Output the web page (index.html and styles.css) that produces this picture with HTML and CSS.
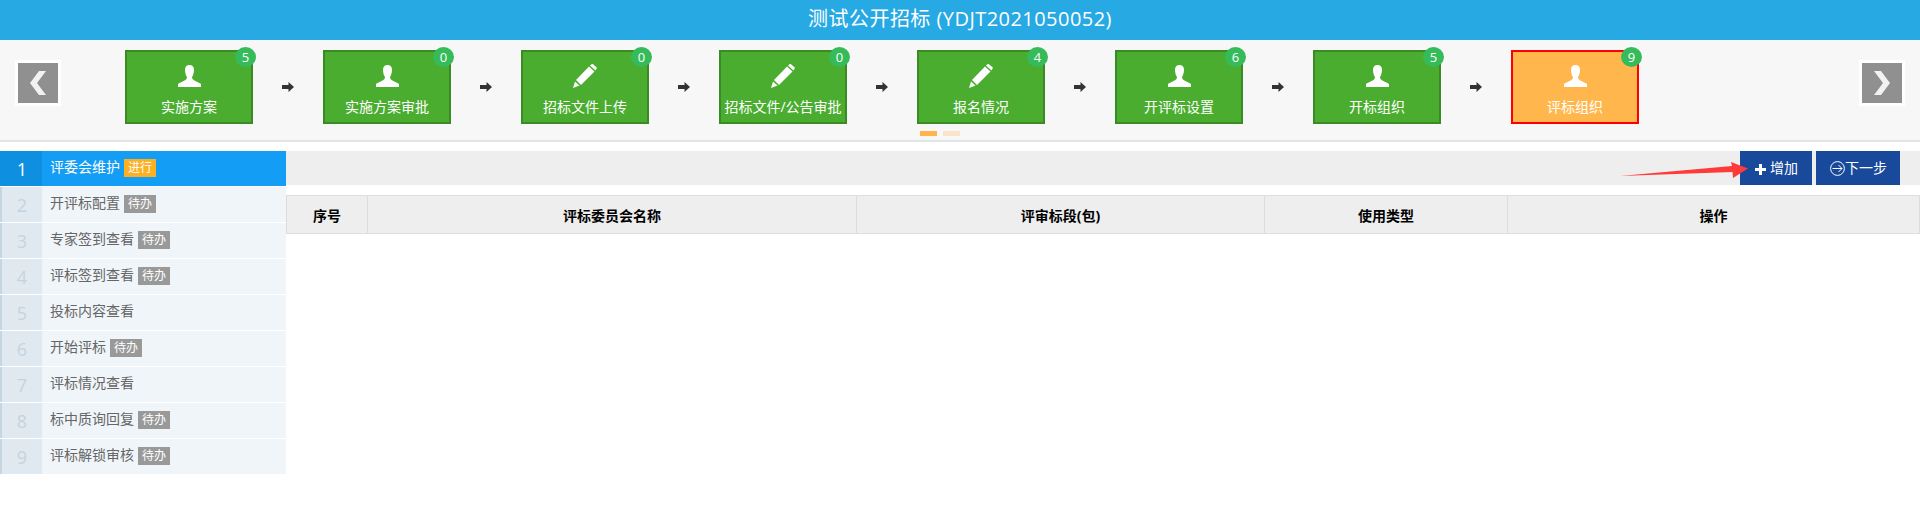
FILE: index.html
```html
<!DOCTYPE html>
<html lang="zh-CN">

<head>
    <meta charset="utf-8">
    <title>测试公开招标</title>
    <link rel="stylesheet" href="styles.css">
</head>

<body>
    <svg class="icon-defs" width="0" height="0">
        <symbol id="i-user" viewBox="0 0 23 22">
            <path d="M11.500 0C8.600 0 7 1.800 7 4.500c0 2.800.7 5.500 1.700 7 .3.6.3 1.700-.2 2.400C7.500 15.500 2.500 17 0 19v3h23v-3c-2.500-2-7.500-3.500-8.500-5.100-.5-.7-.5-1.800-.2-2.400 1-1.500 1.700-4.200 1.700-7C16 1.800 14.400 0 11.500 0z" />
        </symbol>
        <symbol id="i-pencil" viewBox="0 0 24 24">
            <path d="M0 24l2-6.500 4.500 4z" />
            <path d="M3 16L16 2.500l5.500 5L8 21z" />
            <path d="M17 1.500L18.500.3c.5-.4 1-.4 1.500 0l3.500 3c.4.4.4 1 0 1.400l-1 1.800z" />
        </symbol>
        <symbol id="i-arrow" viewBox="0 0 12 10">
            <path d="M0 3h6.500V0L12 5l-5.500 5V7H0z" />
        </symbol>
    </svg>

    <div class="title-bar">测试公开招标 (YDJT2021050052)</div>

    <div class="steps-bar">
        <div class="steps-row">
            <a class="nav-btn">
                <svg width="16" height="24" viewBox="0 0 16 24"><path d="M9 0h7L7 12l9 12H9L0 12z" /></svg>
            </a>
            <div class="steps">
                <div class="step"><span class="step-num">5</span><svg class="step-user"><use href="#i-user" /></svg><span>实施方案</span></div>
                <svg class="step-arrow"><use href="#i-arrow" /></svg>
                <div class="step"><span class="step-num">0</span><svg class="step-user"><use href="#i-user" /></svg><span>实施方案审批</span></div>
                <svg class="step-arrow"><use href="#i-arrow" /></svg>
                <div class="step"><span class="step-num">0</span><svg class="step-pencil"><use href="#i-pencil" /></svg><span>招标文件上传</span></div>
                <svg class="step-arrow"><use href="#i-arrow" /></svg>
                <div class="step"><span class="step-num">0</span><svg class="step-pencil"><use href="#i-pencil" /></svg><span>招标文件/公告审批</span></div>
                <svg class="step-arrow"><use href="#i-arrow" /></svg>
                <div class="step"><span class="step-num">4</span><svg class="step-pencil"><use href="#i-pencil" /></svg><span>报名情况</span></div>
                <svg class="step-arrow"><use href="#i-arrow" /></svg>
                <div class="step"><span class="step-num">6</span><svg class="step-user"><use href="#i-user" /></svg><span>开评标设置</span></div>
                <svg class="step-arrow"><use href="#i-arrow" /></svg>
                <div class="step"><span class="step-num">5</span><svg class="step-user"><use href="#i-user" /></svg><span>开标组织</span></div>
                <svg class="step-arrow"><use href="#i-arrow" /></svg>
                <div class="step step-active"><span class="step-num">9</span><svg class="step-user"><use href="#i-user" /></svg><span>评标组织</span></div>
            </div>
            <a class="nav-btn">
                <svg width="16" height="24" viewBox="0 0 16 24"><path d="M7 0H0l9 12-9 12h7l9-12z" /></svg>
            </a>
        </div>
        <div class="dots">
            <span class="dot dot-on"></span>
            <span class="dot"></span>
        </div>
    </div>

    <div class="main">
        <ul class="side">
            <li class="side-item side-active"><span class="side-no">1</span><span class="side-text">评委会维护</span><span class="tag tag-doing">进行</span></li>
            <li class="side-item"><span class="side-no">2</span><span class="side-text">开评标配置</span><span class="tag">待办</span></li>
            <li class="side-item"><span class="side-no">3</span><span class="side-text">专家签到查看</span><span class="tag">待办</span></li>
            <li class="side-item"><span class="side-no">4</span><span class="side-text">评标签到查看</span><span class="tag">待办</span></li>
            <li class="side-item"><span class="side-no">5</span><span class="side-text">投标内容查看</span></li>
            <li class="side-item"><span class="side-no">6</span><span class="side-text">开始评标</span><span class="tag">待办</span></li>
            <li class="side-item"><span class="side-no">7</span><span class="side-text">评标情况查看</span></li>
            <li class="side-item"><span class="side-no">8</span><span class="side-text">标中质询回复</span><span class="tag">待办</span></li>
            <li class="side-item"><span class="side-no">9</span><span class="side-text">评标解锁审核</span><span class="tag">待办</span></li>
        </ul>

        <div class="content">
            <div class="toolbar">
                <a class="btn btn-add">
                    <svg width="11" height="11" viewBox="0 0 11 11"><path d="M4 0h3v4h4v3H7v4H4V7H0V4h4z" /></svg>
                    <span>增加</span>
                </a>
                <a class="btn btn-next">
                    <svg width="15" height="15" viewBox="0 0 15 15" fill="none" stroke="#fff"><circle cx="7.500" cy="7.500" r="6.900" /><path d="M2.500 7.500h9.500M8.500 4l3.500 3.500L8.500 11" /></svg>
                    <span>下一步</span>
                </a>
                <svg class="red-arrow" width="130" height="18" viewBox="0 0 130 18">
                    <path d="M1 14L113 4 112 0 129 6.500 114 16 113.500 10z" fill="#ff3a3a" />
                </svg>
            </div>

            <table class="grid">
                <thead>
                    <tr>
                        <th class="col-no">序号</th>
                        <th class="col-name">评标委员会名称</th>
                        <th class="col-pack">评审标段(包)</th>
                        <th class="col-type">使用类型</th>
                        <th>操作</th>
                    </tr>
                </thead>
            </table>
        </div>
    </div>
</body>

</html>
```

FILE: styles.css
```css
* {
    box-sizing: border-box;
}

body {
    margin: 0;
    background-color: #ffffff;
    font-family: "Open Sans", "Noto Sans CJK SC", sans-serif;
    font-size: 14px;
    color: #666666;
}

ul {
    margin: 0;
    padding: 0;
    list-style: none;
}

.icon-defs {
    position: absolute;
}

.title-bar {
    height: 40px;
    line-height: 38px;
    text-align: center;
    font-size: 20px;
    letter-spacing: 0.45px;
    color: #ffffff;
    background-color: #27a9e3;
}

.steps-bar {
    height: 102px;
    padding-top: 10px;
    background-color: #f7f7f7;
    border-bottom: 2px solid #e3e3e3;
}

.steps-row {
    display: flex;
    justify-content: space-between;
    padding: 0 15px;
}

.nav-btn {
    display: flex;
    align-items: center;
    justify-content: center;
    width: 46px;
    height: 46px;
    margin-top: 10px;
    background-color: #909090;
    border: 3px solid #ffffff;
    fill: #f2f2f2;
}

.steps {
    display: flex;
    align-items: center;
    flex: 1;
    padding-left: 64px;
}

.step {
    position: relative;
    display: flex;
    flex-direction: column;
    align-items: center;
    width: 128px;
    height: 74px;
    padding-top: 13px;
    color: #ffffff;
    background-color: #4aad2f;
    border: 2px solid #3a8b24;
    white-space: nowrap;
}

.step-active {
    background-color: #ffb74d;
    border-color: #ff0000;
}

.step-num {
    position: absolute;
    top: -5px;
    right: -5px;
    width: 21px;
    height: 20px;
    line-height: 20px;
    text-align: center;
    font-size: 13px;
    color: #ffffff;
    background-color: #35bb5a;
    border-radius: 50%;
}

.step-user {
    width: 23px;
    height: 22px;
    margin-bottom: 9px;
    fill: #ffffff;
}

.step-pencil {
    width: 24px;
    height: 24px;
    margin-top: -1px;
    margin-bottom: 8px;
    fill: #ffffff;
}

.step-arrow {
    width: 12px;
    height: 10px;
    margin: 0 29px;
    fill: #333333;
}

.dots {
    display: flex;
    justify-content: center;
    gap: 6px;
    margin-top: 7px;
    padding-right: 41px;
}

.dot {
    width: 17px;
    height: 5px;
    background-color: #f9e4c8;
}

.dot-on {
    background-color: #ffb54a;
}

.main {
    display: flex;
    margin-top: 9px;
}

.side {
    display: flex;
    flex-direction: column;
    gap: 1px;
    width: 286px;
    flex-shrink: 0;
}

.side-item {
    display: flex;
    align-items: center;
    height: 35px;
    background-color: #f0f5fa;
    border-left: 2px solid #c5d6e0;
}

.side-no {
    display: flex;
    align-items: center;
    justify-content: center;
    align-self: stretch;
    width: 40px;
    margin-right: 8px;
    font-size: 18px;
    color: #c5d3dd;
    background-color: #e1e9f0;
}

.side-text {
    margin-top: -5px;
}

.tag {
    height: 18px;
    line-height: 17px;
    margin-left: 4px;
    margin-top: -1px;
    padding: 0 4px;
    font-size: 12px;
    color: #ffffff;
    background-color: #999999;
}

.side-active {
    color: #ffffff;
    background-color: #149df5;
    border-left-color: #0f8fdf;
}

.side-active .side-no {
    color: #ffffff;
    background-color: #0f8fdf;
}

.tag-doing {
    background-color: #fdb022;
}

.content {
    flex: 1;
}

.toolbar {
    position: relative;
    display: flex;
    justify-content: flex-end;
    gap: 4px;
    height: 34px;
    padding-right: 20px;
    background-color: #eeeeee;
}

.btn {
    display: flex;
    align-items: center;
    height: 34px;
    color: #ffffff;
    background-color: #18499a;
    fill: #ffffff;
}

.btn span {
    margin-top: -3px;
}

.btn-add {
    width: 72px;
    padding-left: 15px;
    gap: 4px;
}

.btn-add svg {
    margin-top: 2px;
}

.btn-next {
    width: 84px;
    padding-left: 14px;
    gap: 0;
}

.red-arrow {
    position: absolute;
    top: 11px;
    right: 171px;
}

.grid {
    width: 100%;
    margin-top: 10px;
    border-collapse: collapse;
    table-layout: fixed;
}

.grid th {
    height: 38px;
    padding: 0;
    font-size: 14px;
    font-weight: 700;
    color: #000000;
    background-color: #eeeeee;
    border: 1px solid #dddddd;
}

.col-no {
    width: 81px;
}

.col-name {
    width: 489px;
}

.col-pack {
    width: 408px;
}

.col-type {
    width: 243px;
}
```
